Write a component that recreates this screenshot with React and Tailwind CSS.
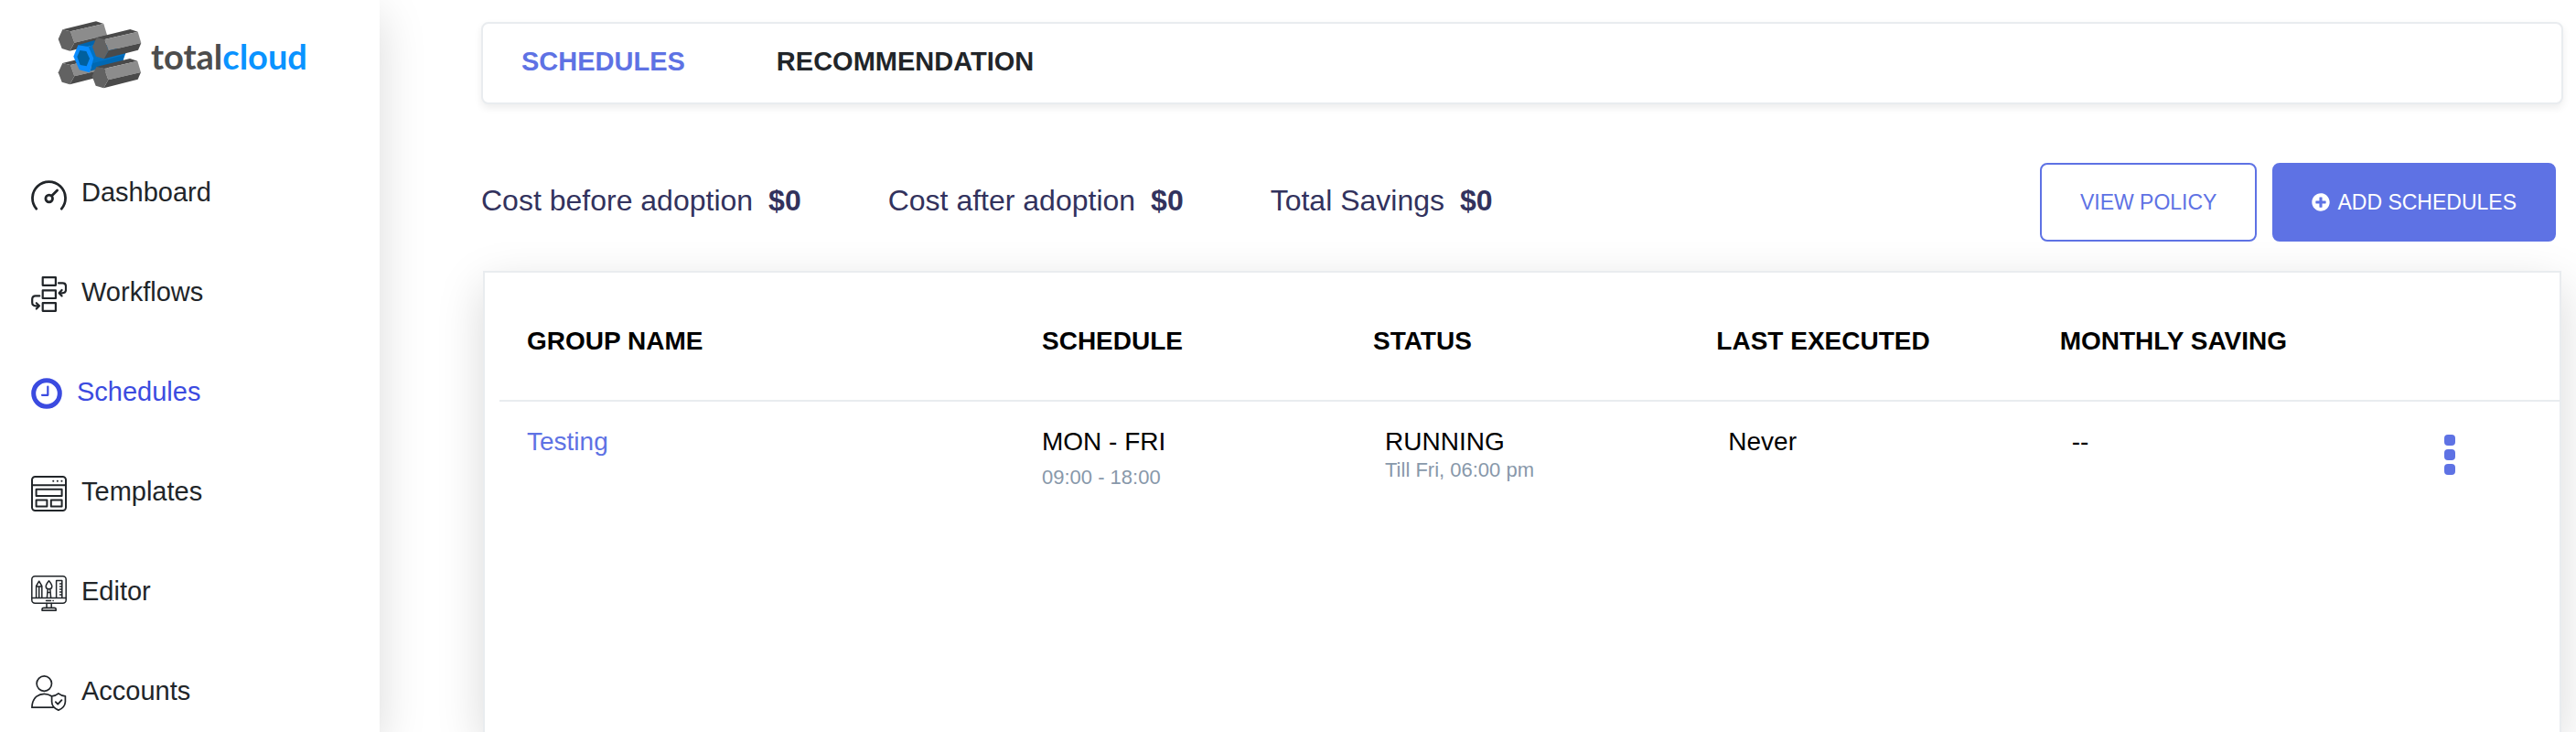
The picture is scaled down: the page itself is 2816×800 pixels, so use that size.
import React, { useState } from "react";
import { FaPlusCircle } from "react-icons/fa";

const Bar = ({ transform }) => (
  <g transform={transform}>
    <polygon points="42,54 152,27 177,35 68,60" fill="#4a4a4a" />
    <polygon points="68,60 177,35 188,72 81,97" fill="#8c8c8c" />
    <polygon points="81,97 188,72 178,95 66,124" fill="#4a4a4a" />
    <polygon points="28,85 42,54 68,60 81,97 66,124 40,116" fill="#626262" />
  </g>
);

function Logo() {
  return (
    <a href="#" className="flex items-center gap-[10px]">
      <svg width="92" height="75" viewBox="26 26 276 225" aria-hidden="true">
        <Bar />
        <Bar transform="translate(0 110)" />
        {/* Blue pipe */}
        <polygon points="93,105 145,90 170,98 125,110" fill="#0064ad" />
        <polygon points="125,110 165,95 250,128 240,157 138,180" fill="#0072c6" />
        <polygon points="140,165 243,138 240,157 133,190" fill="#0068b3" />
        <polygon points="78,142 93,105 127,110 144,148 131,195 97,186" fill="#0a8cff" />
        <polygon points="90,143 99,122 120,125 131,149 121,174 100,170" fill="#00609f" />
        <Bar transform="translate(112 26)" />
        <Bar transform="translate(111 122)" />
      </svg>
      <span className="font-[Lato,sans-serif] text-[38px] font-bold leading-[44px] text-[#4d4d4d]">
        total<span className="text-[#0a93ff]">cloud</span>
      </span>
    </a>
  );
}

const Icon = ({ size = 39, width = 2, children }) => (
  <svg
    width={size}
    height={size}
    viewBox={`0 0 ${size} ${size}`}
    fill="none"
    stroke="currentColor"
    strokeWidth={width}
    strokeLinecap="round"
    strokeLinejoin="round"
    className="shrink-0"
    aria-hidden="true"
  >
    {children}
  </svg>
);

const DashboardIcon = () => (
  <Icon width={2.8}>
    <path d="M5.7 35.2A18 18 0 1 1 33.3 35.2" />
    <circle cx="19.7" cy="24" r="3.8" />
    <path d="M22.6 21L28.6 15" />
  </Icon>
);

const WorkflowsIcon = () => (
  <Icon width={2.2}>
    <rect x="12.7" y="1.2" width="14.2" height="8.6" />
    <rect x="12.7" y="15.4" width="14.2" height="8.6" />
    <rect x="12.7" y="29.2" width="14.2" height="8.6" />
    <path d="M30 7.3H34.5Q38 7.3 38 11V14.6Q38 18.3 34 18.3H31" />
    <path d="M33.6 15L30.6 18.3L33.6 21.4" />
    <path d="M9.2 21.4H4.8Q1.2 21.4 1.2 25V28.6Q1.2 32.3 5 32.3H8" />
    <path d="M5.8 29.2L9 32.3L5.8 35.5" />
  </Icon>
);

const SchedulesIcon = () => (
  <Icon size={34} width={5}>
    <circle cx="17" cy="17" r="14.3" />
    <path d="M18.3 9.5V18.8H12" strokeWidth="2.2" />
  </Icon>
);

const TemplatesIcon = () => (
  <Icon>
    <rect x="1" y="1" width="37" height="37" rx="3.5" />
    <path d="M1 10.3H38" />
    <path d="M24.2 5.8H24.3M28.8 5.8H28.9M33.4 5.8H33.5" />
    <rect x="5.6" y="14.8" width="28" height="7.2" />
    <rect x="5.6" y="26.4" width="11.8" height="7.2" />
    <rect x="21.8" y="26.4" width="11.8" height="7.2" />
  </Icon>
);

const EditorIcon = () => (
  <Icon width={1.5}>
    <rect x="0.8" y="0.8" width="37.4" height="29.4" rx="3.5" />
    <path d="M1 24.4H38M16.5 27.4H21.5M24 27.4H24.2" />
    {/* Pencil */}
    <path d="M5.6 24V11.5L8.7 6.2L11.8 11.5V24M5.6 12H11.8M8.7 12V24" />
    {/* Brush */}
    <path d="M19.5 5.8Q16.2 9.8 16.2 12Q16.2 14.8 19.5 14.8Q22.8 14.8 22.8 12Q22.8 9.8 19.5 5.8ZM18.2 15L17.4 24M20.8 15L21.6 24M18 18.4H21" />
    {/* Ruler */}
    <path d="M27.6 24V5.6H33.8V24M31.5 9H33.8M31.5 12H33.8M31.5 15H33.8M31.5 18H33.8M31.5 21H33.8" />
    <path d="M17 30.4V35M22.2 30.4V35" />
    <path d="M12 38.2V37Q12 35.3 14 35.3H25.2Q27.2 35.3 27.2 37V38.2Z" fill="#c8c8c8" />
  </Icon>
);

const AccountsIcon = () => (
  <Icon width={1.7}>
    <circle cx="14.3" cy="9.1" r="8.2" />
    <path d="M24 35.2H0.9Q1.2 27 6 23.2Q9.6 20.4 14.3 20.4Q18.6 20.4 22.3 22.8" />
    <path d="M29.9 19.8Q26.6 22.6 22.6 22.8V29Q22.8 35.4 29.9 38.1Q37 35.4 37.4 29V22.8Q33.4 22.6 29.9 19.8Z" />
    <path d="M26.8 29.2L29.2 31.6L33.4 27.2" strokeWidth="1.9" />
  </Icon>
);

const navItems = [
  { name: "Dashboard", icon: DashboardIcon },
  { name: "Workflows", icon: WorkflowsIcon },
  { name: "Schedules", icon: SchedulesIcon },
  { name: "Templates", icon: TemplatesIcon },
  { name: "Editor", icon: EditorIcon },
  { name: "Accounts", icon: AccountsIcon },
];

const stats = [
  { label: "Cost before adoption", value: "$0" },
  { label: "Cost after adoption", value: "$0" },
  { label: "Total Savings", value: "$0" },
];

const schedules = [
  {
    group: "Testing",
    days: "MON - FRI",
    hours: "09:00 - 18:00",
    status: "RUNNING",
    until: "Till Fri, 06:00 pm",
    lastExecuted: "Never",
    saving: "--",
  },
];

function Sidebar() {
  return (
    <aside className="w-[415px] shrink-0 bg-white pt-[23px] shadow-[0_16px_48px_rgba(0,0,0,0.15)]">
      <div className="pl-[63px]">
        <Logo />
      </div>
      <nav className="mt-[90px] flex flex-col gap-[61px] pl-[34px]">
        {navItems.map(({ name, icon: NavIcon }) => (
          <a
            key={name}
            href="#"
            className={`flex items-center gap-4 text-[29px] leading-[44px] ${
              name === "Schedules" ? "text-[#3b4be0]" : "text-[#212529]"
            }`}
          >
            <NavIcon />
            <span className="pb-1">{name}</span>
          </a>
        ))}
      </nav>
    </aside>
  );
}

function App() {
  const [tab, setTab] = useState("SCHEDULES");

  return (
    <div className="flex min-h-screen overflow-hidden bg-white font-['Liberation_Sans',Arial,sans-serif]">
      <Sidebar />

      <main className="flex min-w-0 flex-1 flex-col pl-[111px] pr-[14px] pt-6">
        {/* Tabs */}
        <div className="flex gap-[100px] rounded-lg border-2 border-[#e9ecef] bg-white pb-6 pl-[42px] pt-5 shadow-[0_4px_8px_rgba(0,0,0,0.075)]">
          {["SCHEDULES", "RECOMMENDATION"].map((name) => (
            <button
              key={name}
              type="button"
              onClick={() => setTab(name)}
              className={`text-[29px] font-bold leading-[42px] ${
                tab === name ? "text-[#5e72e4]" : "text-[#212529]"
              }`}
            >
              {name}
            </button>
          ))}
        </div>

        {/* Savings and actions */}
        <div className="mt-16 flex items-center justify-between pr-2">
          <div className="flex gap-[95px] pb-1 text-[32px] leading-[48px] text-[#32325d]">
            {stats.map((stat) => (
              <p key={stat.label} className="flex gap-[17px]">
                {stat.label} <strong className="font-bold">{stat.value}</strong>
              </p>
            ))}
          </div>
          <div className="flex gap-[17px] text-[23px]">
            <button
              type="button"
              className="h-[86px] rounded-lg border-2 border-[#5e72e4] bg-white px-[42px] text-[#5e72e4]"
            >
              VIEW POLICY
            </button>
            <button
              type="button"
              className="flex h-[86px] items-center gap-2 rounded-lg border-2 border-[#5e72e4] bg-[#5e72e4] px-[41px] text-white"
            >
              <FaPlusCircle className="size-5" />
              ADD SCHEDULES
            </button>
          </div>
        </div>

        {/* Schedules table */}
        <div className="mx-0.5 mt-8 flex-1 border-2 border-b-0 border-[#e9ecef] bg-white pl-4 pt-3 shadow-[0_16px_48px_rgba(0,0,0,0.15)]">
          <table className="w-full table-fixed border-separate border-spacing-0 text-left text-[28px] leading-[42px] text-black">
            <thead>
              <tr className="[&>*]:border-b-2 [&>*]:border-[#e9ecef] [&>*]:pb-[43px] [&>*]:pl-[30px] [&>*]:pt-[42px]">
                <th className="w-1/4">GROUP NAME</th>
                <th className="w-[362px]">SCHEDULE</th>
                <th className="w-1/6">STATUS</th>
                <th className="w-1/6">LAST EXECUTED</th>
                <th className="w-1/6">MONTHLY SAVING</th>
                <td></td>
              </tr>
            </thead>
            <tbody>
              {schedules.map((item) => (
                <tr key={item.group} className="align-top [&>td]:pt-[23px]">
                  <td className="pl-[30px]">
                    <a href="#" className="text-[#5e72e4]">
                      {item.group}
                    </a>
                  </td>
                  <td className="pl-[30px]">
                    <div>{item.days}</div>
                    <div className="text-[22px] leading-9 text-[#8898aa]">{item.hours}</div>
                  </td>
                  <td className="pl-[43px]">
                    <div>{item.status}</div>
                    <div className="text-[22px] leading-5 text-[#8898aa]">{item.until}</div>
                  </td>
                  <td className="pl-[43px]">{item.lastExecuted}</td>
                  <td className="pl-[43px]">{item.saving}</td>
                  <td className="pl-[75px]">
                    <button type="button" aria-label="Actions" className="mt-[13px] flex flex-col gap-1">
                      <span className="size-3 rounded-sm bg-[#5e72e4]"></span>
                      <span className="size-3 rounded-sm bg-[#5e72e4]"></span>
                      <span className="size-3 rounded-sm bg-[#5e72e4]"></span>
                    </button>
                  </td>
                </tr>
              ))}
            </tbody>
          </table>
        </div>
      </main>
    </div>
  );
}

export default App;
